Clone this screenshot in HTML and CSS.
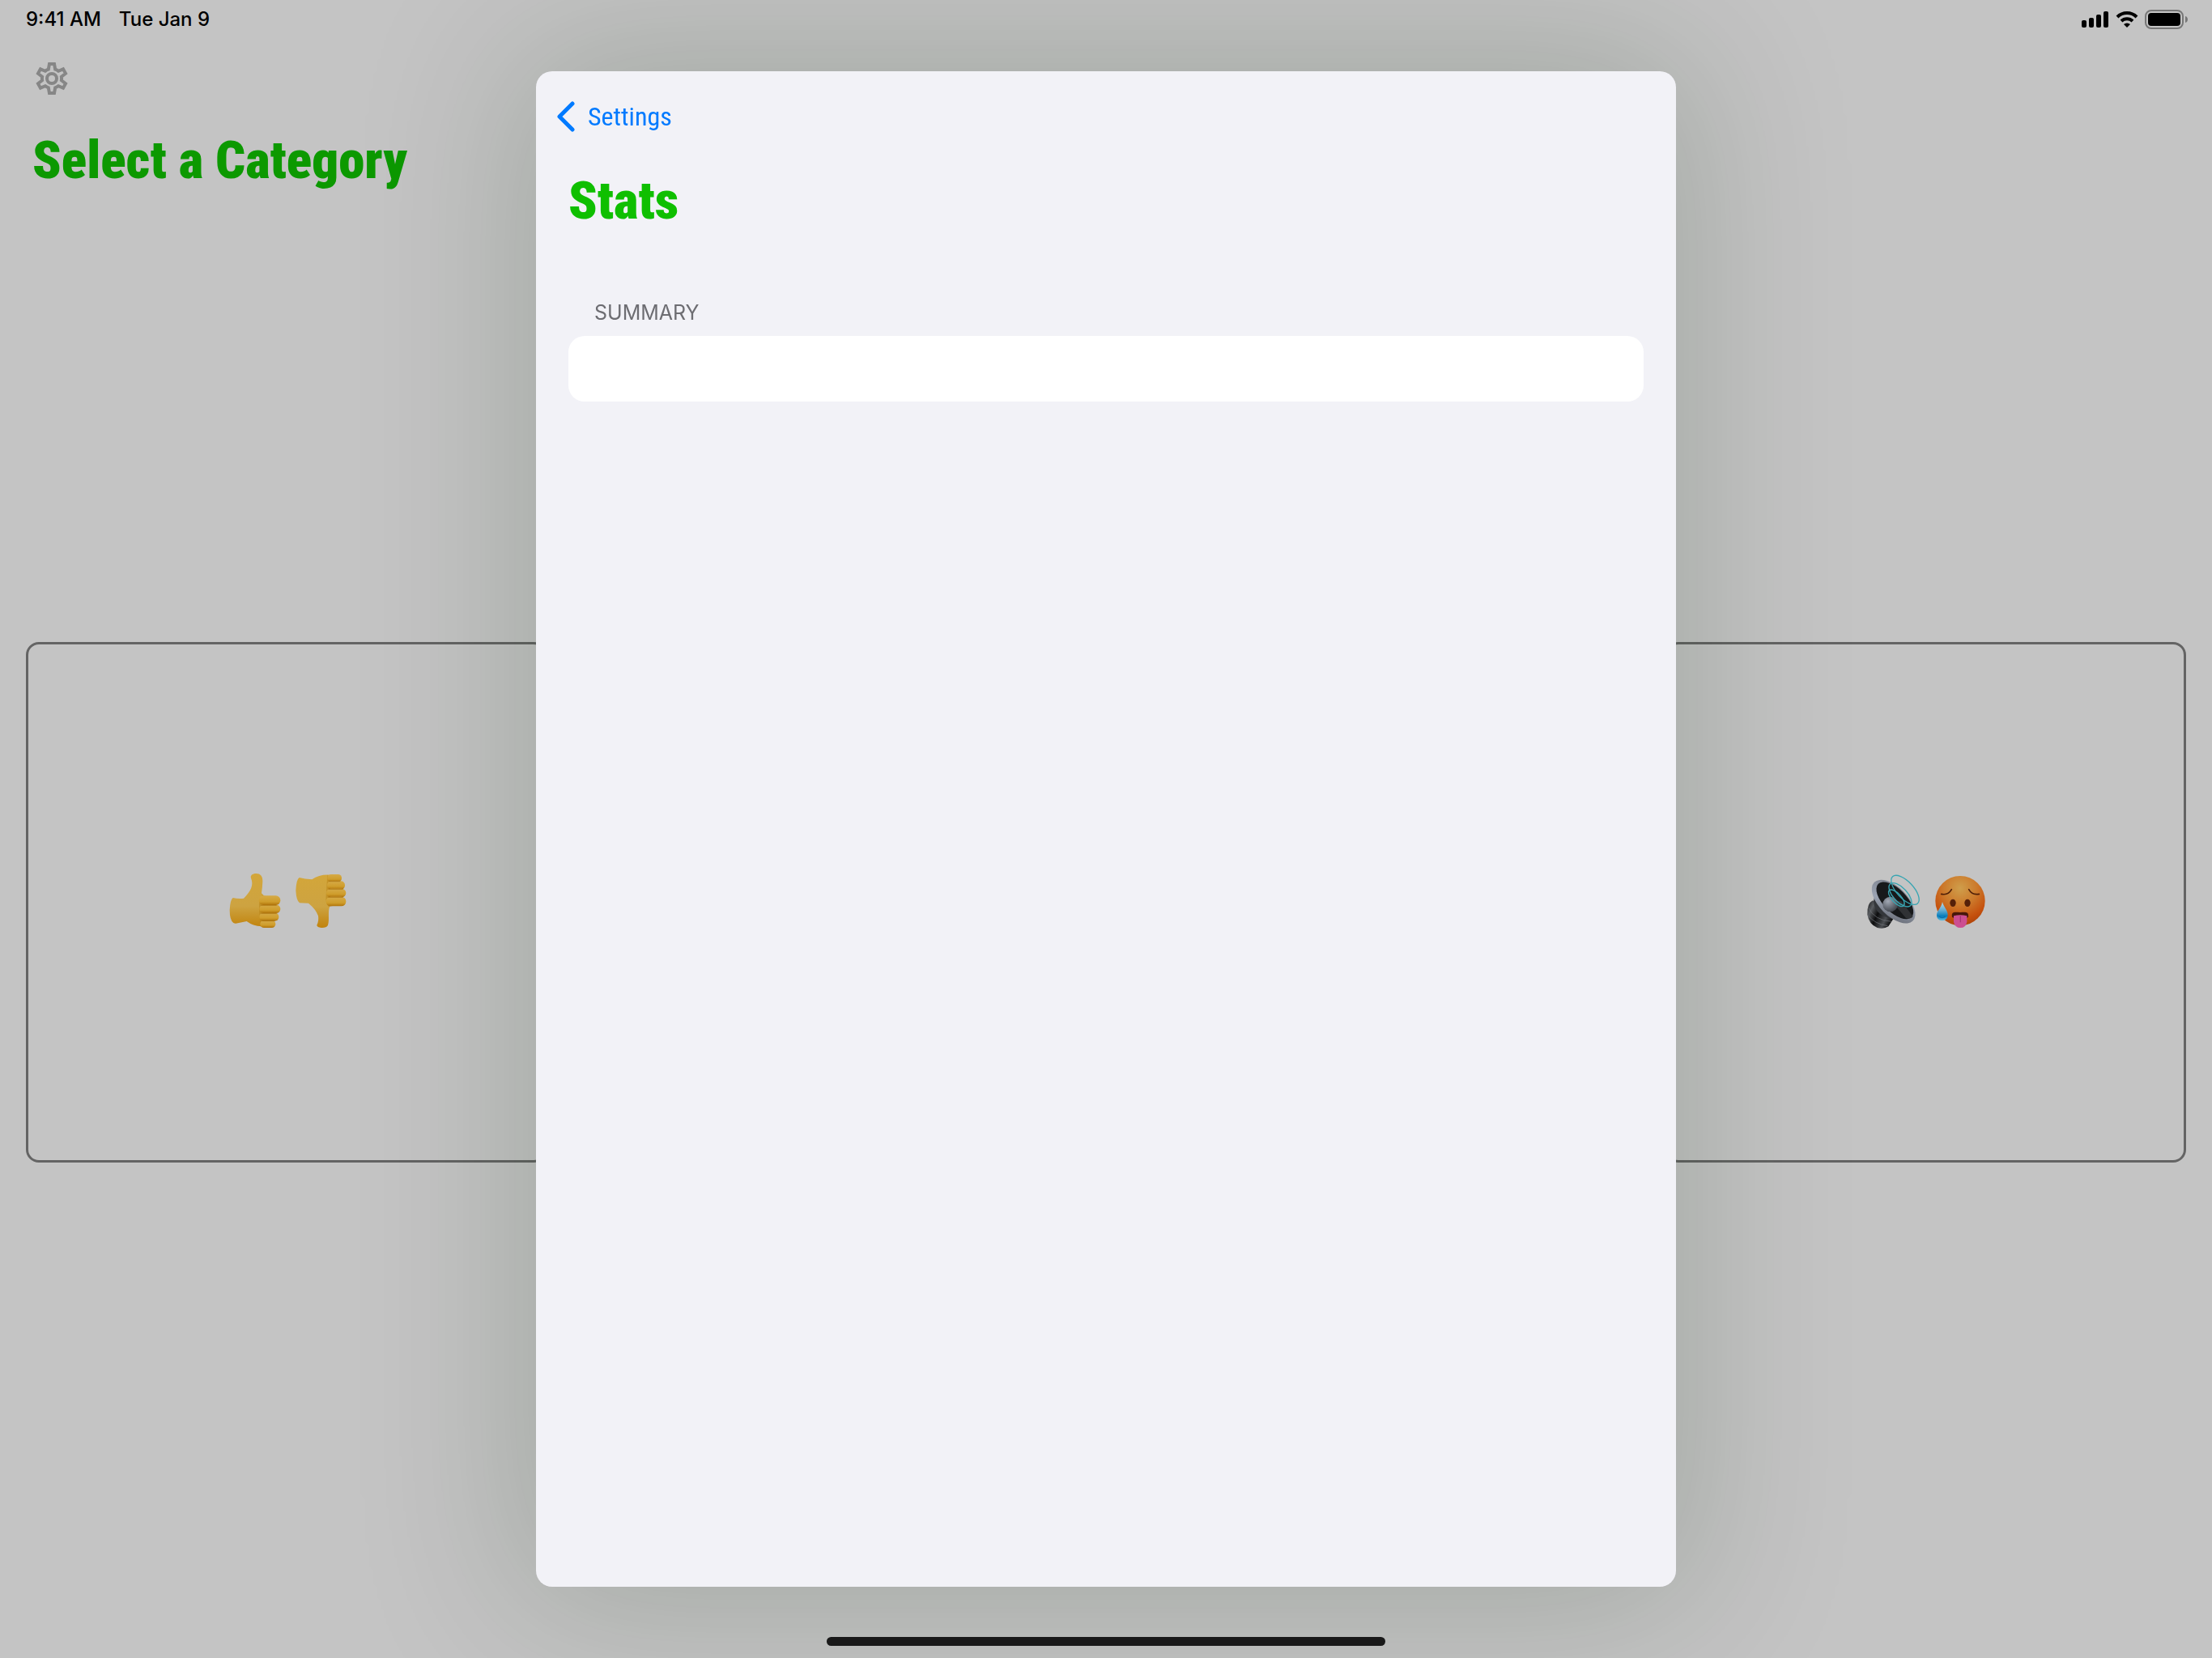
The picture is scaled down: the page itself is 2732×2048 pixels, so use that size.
FILE: index.html
```html
<!DOCTYPE html>
<html lang="en">
<head>
<meta charset="utf-8">
<meta name="viewport" content="width=device-width, initial-scale=1">
<title>Stats</title>
<link rel="stylesheet" href="styles.css">
</head>
<body>
<div class="app">
  <header class="status-bar">
    <div class="status-text"><time>9:41 AM</time><span>Tue Jan 9</span></div>
    <div class="status-icons">
      <svg width="34" height="20" viewBox="0 0 34 20" aria-hidden="true"><rect x="0" y="11" width="6" height="9" rx="2"/><rect x="9" y="8" width="6" height="12" rx="2"/><rect x="18" y="4" width="6" height="16" rx="2"/><rect x="27" y="0" width="6" height="20" rx="2"/></svg>
      <svg width="28" height="20" viewBox="0 0 28 20" aria-hidden="true"><path d="M2 7a17 17 0 0 1 24 0M7 12a10 10 0 0 1 14 0" fill="none" stroke="#000" stroke-width="4"/><path d="M14 20l-4-4a6 6 0 0 1 8 0z"/></svg>
      <svg width="53" height="24" viewBox="0 0 53 24" aria-hidden="true"><rect x="1" y="1" width="46" height="22" rx="7" fill="none" stroke="#777" stroke-width="2"/><rect x="4" y="4" width="40" height="16" rx="4"/><path d="M50 8c4 1 4 7 0 8z" fill="#777"/></svg>
    </div>
  </header>
  <nav class="toolbar">
    <button class="gear" type="button" aria-label="Settings">
      <svg width="40" height="40" viewBox="-20 -20 40 40" fill="none" stroke="#868686" stroke-width="4" aria-hidden="true"><circle r="6"/><path d="M-3-18H3L4.200-11.300Q6.500-10.500 8.200-9.200L14-11.600L17-6.200L11.900-2.200Q12.300 0 11.900 2.200L17 6.200L14 11.600L8.200 9.200Q6.500 10.500 4.200 11.300L3 18H-3L-4.200 11.300Q-6.500 10.500-8.200 9.200L-14 11.600L-17 6.200L-11.900 2.200Q-12.300 0-11.900-2.200L-17-6.200L-14-11.600L-8.200-9.200Q-6.500-10.500-4.200-11.300Z"/></svg>
    </button>
  </nav>
  <h1 class="title page-title">Select a Category</h1>
  <main class="cards">
    <button class="card" type="button" aria-label="Thumbs up, thumbs down">
      <svg class="emoji" viewBox="56 93 204 204" aria-hidden="true">
        <defs>
          <linearGradient id="skin" x1="0" y1="0" x2="0" y2="1"><stop offset="0" stop-color="#d3a63a"/><stop offset=".6" stop-color="#cda341"/><stop offset="1" stop-color="#c1830d"/></linearGradient>
          <linearGradient id="finger" x1="0" y1="0" x2="0" y2="1"><stop offset="0" stop-color="#d5aa47"/><stop offset=".65" stop-color="#cf9d2b"/><stop offset="1" stop-color="#b0730a"/></linearGradient>
        </defs>
        <path fill="url(#skin)" d="M82 177Q72 184 70 222Q70 260 84 270Q91 274 100 271L133 264Q156 281 188 283L208 287L196 168L188 160Q191 140 192 117C193 97 184 87 168 87C154 87 146 94 149 104C160 130 148 152 122 179Q101 181 82 177Z"/>
        <path fill="#b77f12" opacity=".5" d="M186 165Q200 170 181 180Q176 216 184 283L196 285L206 172Z"/>
        <rect x="183" y="260" width="57" height="28" rx="14" fill="url(#finger)"/>
        <rect x="180" y="232" width="72" height="31" rx="15" fill="url(#finger)"/>
        <rect x="180" y="202" width="78" height="32" rx="16" fill="url(#finger)"/>
        <rect x="178" y="169" width="80" height="35" rx="17" fill="url(#finger)"/>
        <path d="M186 205H244M186 235H244M188 262H238" stroke="#a56b0a" stroke-width="2"/>
      </svg>
      <svg class="emoji" viewBox="302 93 204 204" aria-hidden="true">
        <path fill="url(#skin)" d="M328 102Q317 108 315 150Q317 188 329 196L362 197Q390 220 398 244Q401 264 393 278C394 290 429 292 434 278C441 258 432 226 442 206L440 92Q402 90 375 109Q348 108 328 102Z"/>
        <path fill="#b77f12" opacity=".5" d="M432 94L427 170Q424 196 438 211L454 206L448 94Z"/>
        <rect x="432" y="90" width="53" height="28" rx="13" fill="url(#finger)"/>
        <rect x="431" y="115" width="66" height="31" rx="15" fill="url(#finger)"/>
        <rect x="428" y="143" width="73" height="32" rx="16" fill="url(#finger)"/>
        <rect x="427" y="173" width="74" height="35" rx="17" fill="url(#finger)"/>
        <path d="M438 116H480M436 145H490M435 175H490" stroke="#a56b0a" stroke-width="2"/>
      </svg>
    </button>
    <button class="card card-last" type="button" aria-label="Loud, hot">
      <svg class="emoji" viewBox="72 93 204 204" aria-hidden="true">
        <defs>
          <linearGradient id="magnet" x1="0" y1="0" x2="1" y2=".5"><stop offset="0" stop-color="#171819"/><stop offset=".25" stop-color="#5a5d61"/><stop offset=".5" stop-color="#0c0d0e"/><stop offset=".8" stop-color="#4d5054"/><stop offset="1" stop-color="#101112"/></linearGradient>
          <linearGradient id="rim" x1="0" y1="0" x2="1" y2="1"><stop offset="0" stop-color="#777c87"/><stop offset=".5" stop-color="#9ba3b2"/><stop offset="1" stop-color="#5c6069"/></linearGradient>
          <radialGradient id="dome" cx=".35" cy=".3" r=".8"><stop offset="0" stop-color="#a2a9b5"/><stop offset="1" stop-color="#373b42"/></radialGradient>
        </defs>
        <path fill="url(#magnet)" d="M99 187Q77 198 79 239Q85 275 116 288Q140 294 157 283L179 249Z"/>
        <path fill="none" stroke="#73767b" stroke-width="2" d="M83 214Q105 260 169 265M81 241Q105 274 154 281"/>
        <path fill="#34373b" d="M106 170L102 190Q105 235 155 251L190 257Z"/>
        <ellipse cx="176" cy="191" rx="101" ry="53" transform="rotate(45 176 191)" fill="url(#rim)"/>
        <ellipse cx="181" cy="187" rx="87" ry="43" transform="rotate(45 181 187)" fill="#17191b"/>
        <path d="M165 185L222 252Q239 258 248 247L206 190Z" fill="#303235"/>
        <circle cx="164" cy="201" r="28" fill="url(#dome)"/>
        <g fill="none" stroke="#39a5b2" stroke-width="4"><ellipse cx="219" cy="148" rx="68" ry="31" transform="rotate(47 219 148)"/><ellipse cx="201" cy="166" rx="55" ry="26" transform="rotate(47 201 166)"/><ellipse cx="187" cy="178" rx="39" ry="17" transform="rotate(47 187 178)"/></g>
      </svg>
      <svg class="emoji" viewBox="318 93 204 204" aria-hidden="true">
        <defs>
          <radialGradient id="heat" cx=".5" cy=".25" r=".76"><stop offset="0" stop-color="#cf9e4b"/><stop offset=".45" stop-color="#cc792b"/><stop offset=".8" stop-color="#c5500d"/><stop offset="1" stop-color="#ad4309"/></radialGradient>
          <linearGradient id="drop" x1="0" y1="0" x2="0" y2="1"><stop offset="0" stop-color="#b9dce8"/><stop offset=".45" stop-color="#63abd1"/><stop offset=".75" stop-color="#087ebc"/><stop offset="1" stop-color="#6cc1df"/></linearGradient>
        </defs>
        <circle cx="423" cy="188" r="92" fill="url(#heat)"/>
        <path d="M353 163Q378 169 391 146M455 146Q467 168 493 163" fill="none" stroke="#512008" stroke-width="5" stroke-linecap="round"/>
        <ellipse cx="396" cy="196" rx="11" ry="14" fill="#552009"/><ellipse cx="450" cy="196" rx="11" ry="14" fill="#552009"/>
        <path d="M393 248C389 225 407 231 423 231S456 226 453 248L449 251Q423 233 397 251Z" fill="#48170a"/>
        <path d="M399 244Q423 237 448 244V266Q444 288 424 288Q403 288 399 266Z" fill="#cc4e91"/>
        <path d="M424 244V268" stroke="#a83673" stroke-width="4"/>
        <path d="M357 192C362 212 378 224 377 240Q376 262 356 262Q336 261 336 241C336 225 353 214 357 192Z" fill="url(#drop)"/>
        <path d="M345 246Q356 255 368 246" fill="none" stroke="#096fae" stroke-width="4"/>
      </svg>
    </button>
  </main>
</div>

<div class="overlay">
  <section class="sheet" role="dialog" aria-modal="true" aria-labelledby="sheet-title">
    <a class="back" href="#settings">
      <svg width="22" height="38" viewBox="0 0 22 38" aria-hidden="true"><path d="M19 3L3 19l16 16" fill="none" stroke="currentColor" stroke-width="5" stroke-linecap="round" stroke-linejoin="round"/></svg>
      Settings
    </a>
    <h2 class="title sheet-title" id="sheet-title">Stats</h2>
    <h3 class="section-label">SUMMARY</h3>
    <div class="row"></div>
  </section>
</div>
<div class="home-indicator"></div>
</body>
</html>
```
FILE: styles.css
```css
* {
  box-sizing: border-box;
}

body {
  margin: 0;
  background: #c4c4c4;
  color: #000;
  font-family: Inter, "Liberation Sans", sans-serif;
}

button {
  padding: 0;
  border: 0;
  background: none;
}

svg {
  display: block;
  flex: none;
}

h1, h2, h3 {
  margin: 0;
}

.app {
  display: flex;
  flex-direction: column;
  min-height: 100vh;
  padding-bottom: 40px;
}

.status-bar {
  display: flex;
  justify-content: space-between;
  align-items: center;
  height: 48px;
  padding: 0 30px 0 32px;
}

.status-text {
  display: flex;
  gap: 22px;
  font-size: 24px;
  font-weight: 500;
  line-height: 48px;
}

.status-icons {
  display: flex;
  align-items: center;
  gap: 8px;
}

.toolbar {
  display: flex;
  align-items: center;
  height: 98px;
  padding: 0 44px;
}

.gear {
  width: 40px;
  height: 40px;
}

.title {
  font-family: "Avenir Next Condensed", "Roboto Condensed", Roboto, sans-serif;
  font-size: 65px;
  font-weight: 900;
  line-height: 80px;
}

.page-title {
  padding: 12px 40px 0;
  height: 75px;
  color: #0c9900;
}

.cards {
  display: grid;
  grid-template-columns: repeat(4, 1fr);
  gap: 32px;
  flex: 1;
  align-content: center;
  padding: 0 32px;
}

.card {
  display: flex;
  justify-content: center;
  align-items: center;
  gap: 14px;
  aspect-ratio: 1;
  border: 3px solid #646464;
  border-radius: 16px;
}

.card-last {
  grid-column: 4;
}

.emoji {
  width: 68px;
  height: 68px;
  overflow: visible;
}

.overlay {
  position: fixed;
  inset: 0;
  display: flex;
  justify-content: center;
  padding: 88px 32px;
}

.sheet {
  width: 100%;
  max-width: 1408px;
  padding: 26px 40px;
  border-radius: 20px;
  background: #f2f2f7;
  box-shadow: 0 0 200px 24px rgba(6, 36, 0, 0.17);
}

.back {
  display: inline-flex;
  align-items: center;
  gap: 16px;
  margin-left: -14px;
  color: #007aff;
  font-family: "Avenir Next Condensed", "Roboto Condensed", Roboto, sans-serif;
  font-size: 32px;
  line-height: 60px;
  text-decoration: none;
}

.sheet-title {
  margin-top: 34px;
  color: #0fbf00;
}

.section-label {
  margin-top: 82px;
  padding: 0 32px;
  color: #6d6d72;
  font-size: 25px;
  font-weight: 400;
  line-height: 32px;
}

.row {
  height: 81px;
  margin-top: 13px;
  border-radius: 20px;
  background: #fff;
}

.home-indicator {
  position: fixed;
  bottom: 15px;
  left: 50%;
  width: 690px;
  height: 11px;
  margin-left: -345px;
  border-radius: 6px;
  background: #191919;
}
```
